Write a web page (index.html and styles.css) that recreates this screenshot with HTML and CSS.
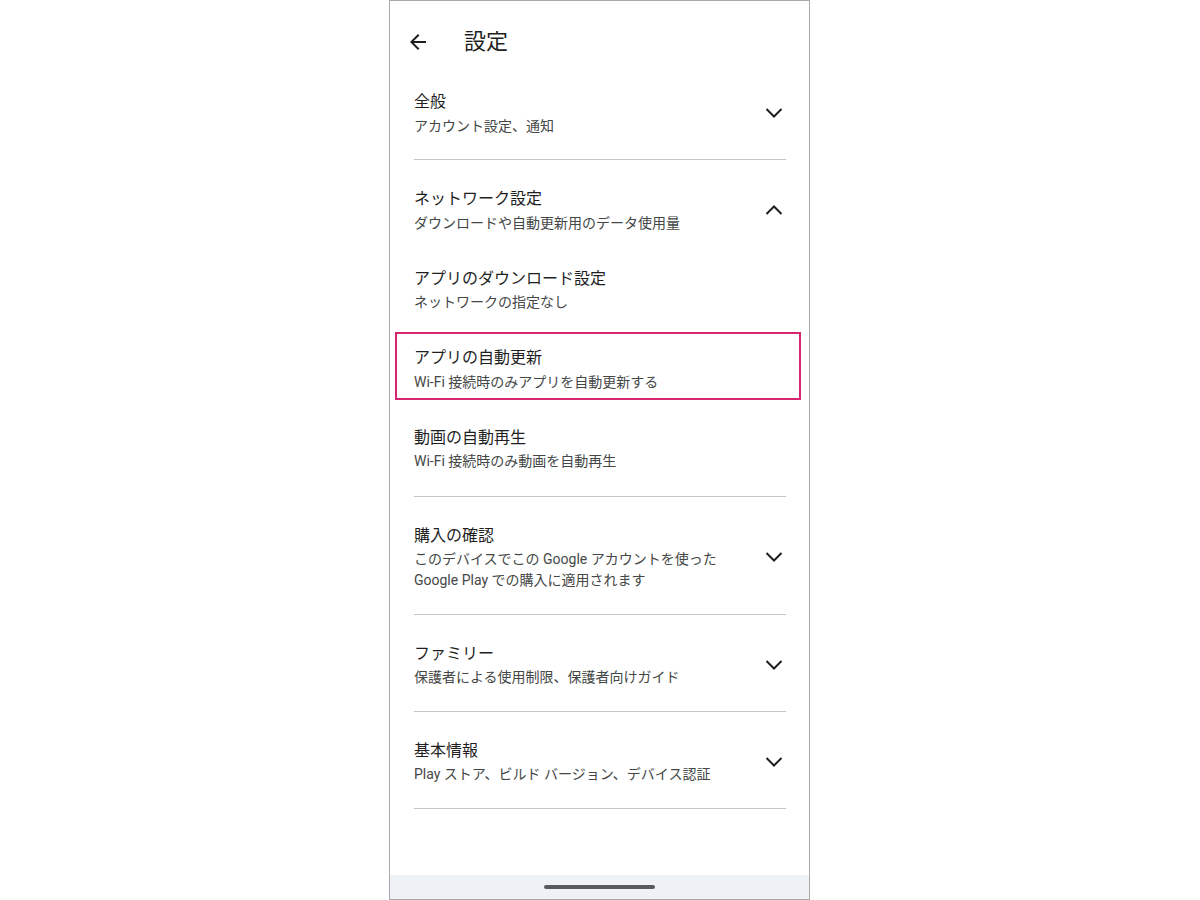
FILE: index.html
```html
<!DOCTYPE html>
<html lang="ja">
<head>
<meta charset="utf-8">
<title>設定</title>
<link rel="stylesheet" href="styles.css">
</head>
<body>
<div class="phone">
  <header class="header">
    <svg class="back" width="24" height="24" viewBox="0 0 24 24"><path d="M20 11H7.83l5.59-5.59L12 4l-8 8 8 8 1.41-1.41L7.83 13H20v-2z" fill="#1f1f1f"/></svg>
    <h1 class="page-title">設定</h1>
  </header>

  <section class="section">
    <div class="row">
      <div class="text">
        <div class="title">全般</div>
        <div class="sub">アカウント設定、通知</div>
      </div>
      <svg class="chev" width="20" height="12" viewBox="0 0 20 12"><polyline points="2.5,2 10,9.5 17.5,2" fill="none" stroke="#1f1f1f" stroke-width="2"/></svg>
    </div>
  </section>

  <section class="section section-open">
    <div class="row row-head">
      <div class="text">
        <div class="title">ネットワーク設定</div>
        <div class="sub">ダウンロードや自動更新用のデータ使用量</div>
      </div>
      <svg class="chev" width="20" height="12" viewBox="0 0 20 12"><polyline points="2.5,10 10,2.5 17.5,10" fill="none" stroke="#1f1f1f" stroke-width="2"/></svg>
    </div>
    <div class="row row-sub">
      <div class="text">
        <div class="title">アプリのダウンロード設定</div>
        <div class="sub">ネットワークの指定なし</div>
      </div>
    </div>
    <div class="row row-sub row-marked">
      <div class="text">
        <div class="title">アプリの自動更新</div>
        <div class="sub">Wi-Fi 接続時のみアプリを自動更新する</div>
      </div>
      <div class="highlight"></div>
    </div>
    <div class="row row-sub">
      <div class="text">
        <div class="title">動画の自動再生</div>
        <div class="sub">Wi-Fi 接続時のみ動画を自動再生</div>
      </div>
    </div>
  </section>

  <section class="section">
    <div class="row">
      <div class="text">
        <div class="title">購入の確認</div>
        <div class="sub">このデバイスでこの Google アカウントを使った<br>Google Play での購入に適用されます</div>
      </div>
      <svg class="chev" width="20" height="12" viewBox="0 0 20 12"><polyline points="2.5,2 10,9.5 17.5,2" fill="none" stroke="#1f1f1f" stroke-width="2"/></svg>
    </div>
  </section>

  <section class="section">
    <div class="row">
      <div class="text">
        <div class="title">ファミリー</div>
        <div class="sub">保護者による使用制限、保護者向けガイド</div>
      </div>
      <svg class="chev" width="20" height="12" viewBox="0 0 20 12"><polyline points="2.5,2 10,9.5 17.5,2" fill="none" stroke="#1f1f1f" stroke-width="2"/></svg>
    </div>
  </section>

  <section class="section">
    <div class="row">
      <div class="text">
        <div class="title">基本情報</div>
        <div class="sub">Play ストア、ビルド バージョン、デバイス認証</div>
      </div>
      <svg class="chev" width="20" height="12" viewBox="0 0 20 12"><polyline points="2.5,2 10,9.5 17.5,2" fill="none" stroke="#1f1f1f" stroke-width="2"/></svg>
    </div>
  </section>

  <div class="navbar"><div class="handle"></div></div>
</div>
</body>
</html>
```

FILE: styles.css
```css
* { box-sizing: border-box; }
html, body { margin: 0; padding: 0; background: #ffffff; }
body {
  font-family: "Roboto", "Noto Sans CJK JP", sans-serif;
  color: #1f1f1f;
}
.phone {
  margin-left: 389px;
  width: 421px;
  height: 900px;
  border: 1px solid #a9a9a9;
  background: #ffffff;
  display: flex;
  flex-direction: column;
}
.header {
  height: 62px;
  padding: 20px 0 0 16px;
  display: flex;
  align-items: center;
  flex-shrink: 0;
}
.back { display: block; flex-shrink: 0; }
.page-title {
  margin: 0 0 0 34px;
  font-size: 22px;
  font-weight: 400;
  line-height: 42px;
  color: #1f1f1f;
}
.section {
  margin: 0 23px 0 24px;
  padding: 27px 0 22.5px;
  border-bottom: 1px solid #c4c7c5;
  flex-shrink: 0;
}
.section-open { padding-bottom: 7px; }
.row {
  display: flex;
  align-items: center;
  position: relative;
}
.row-head { padding-bottom: 16.5px; }
.row-sub { padding: 16.5px 0; }
.text { flex: 1; min-width: 0; }
.title {
  font-size: 16px;
  line-height: 24px;
  color: #1f1f1f;
}
.sub {
  margin-top: 1.5px;
  font-size: 14px;
  line-height: 21px;
  color: #444746;
}
.chev { display: block; flex-shrink: 0; margin-right: 2px; }
.highlight {
  position: absolute;
  top: 2px;
  left: -19px;
  right: -15px;
  height: 68px;
  border: 2px solid #d6266f;
  pointer-events: none;
}
.navbar {
  margin-top: auto;
  height: 24px;
  background: #eef1f6;
  display: flex;
  justify-content: center;
  align-items: center;
  flex-shrink: 0;
}
.handle {
  width: 111px;
  height: 4px;
  border-radius: 2px;
  background: #575b60;
}
```
